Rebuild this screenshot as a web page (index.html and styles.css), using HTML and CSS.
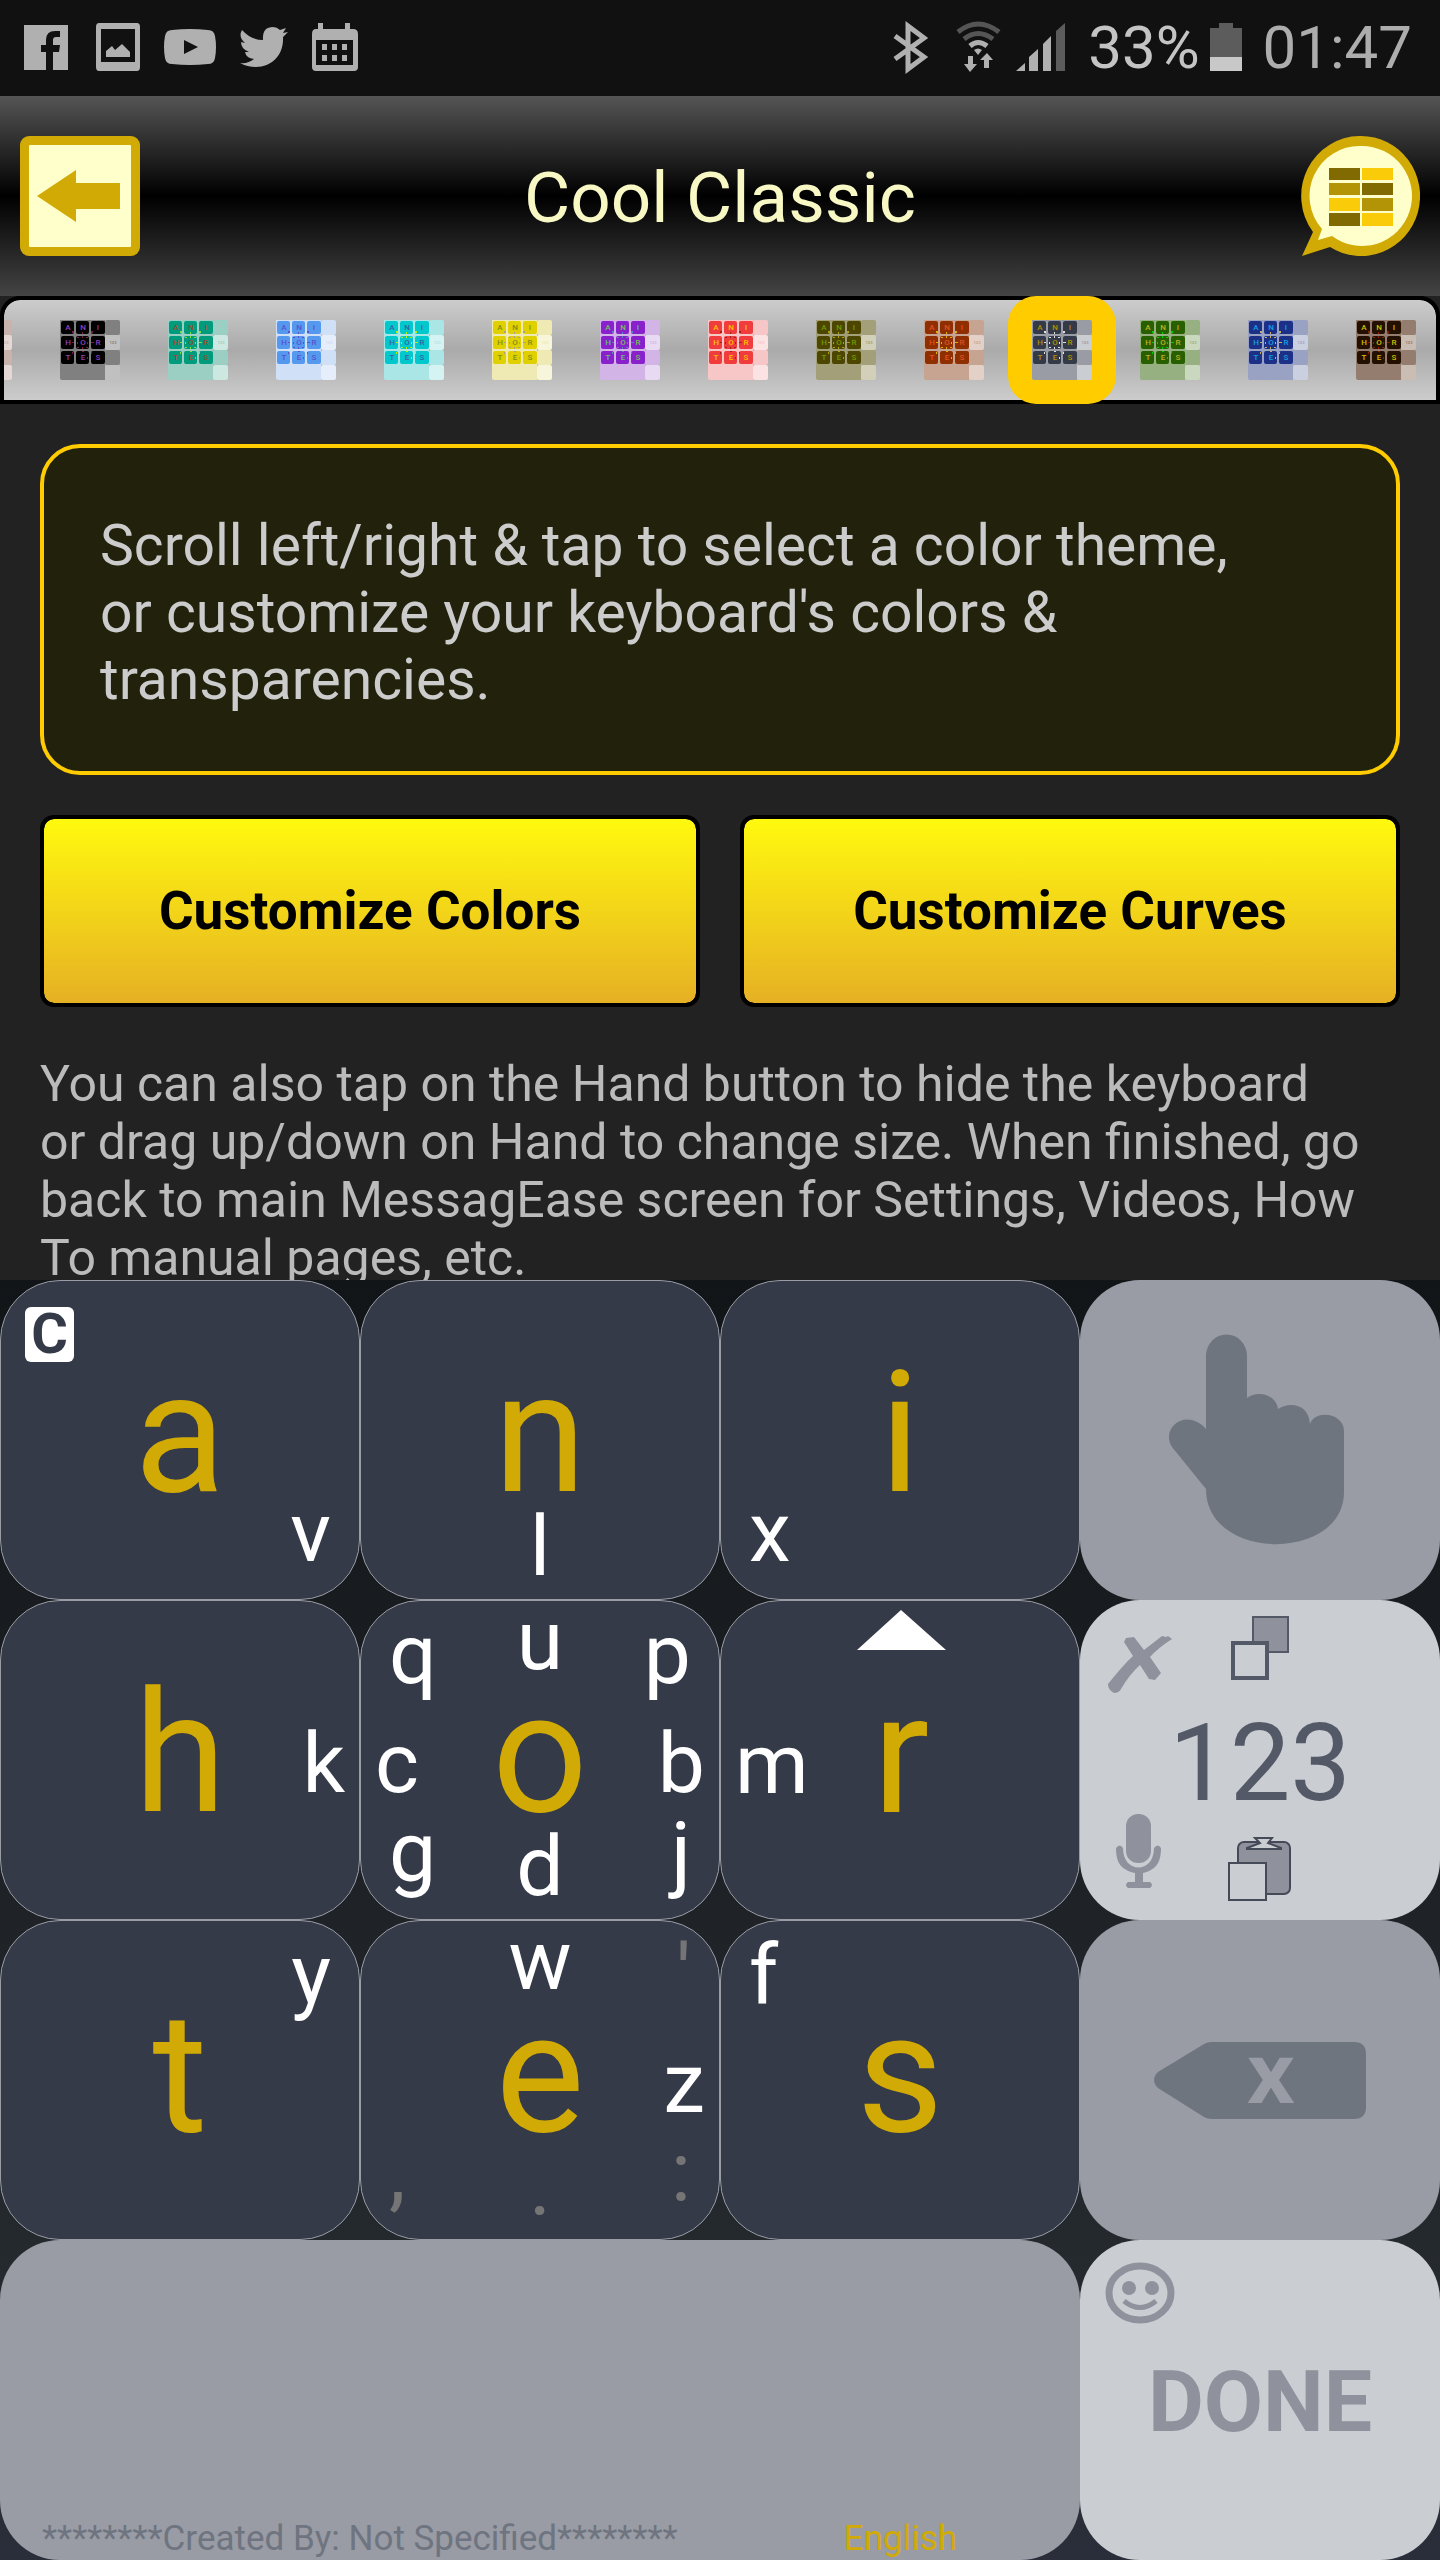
FILE: index.html
```html
<!DOCTYPE html>
<html lang="en">
<head>
<meta charset="utf-8">
<meta name="viewport" content="width=device-width, initial-scale=1">
<title>Cool Classic</title>
<link rel="stylesheet" href="styles.css">
</head>
<body>
<svg class="defs" aria-hidden="true">
  <symbol id="thumb" viewBox="0 0 60 60">
    <path class="t-mid" d="M0 0h45v60H2q-2 0-2-2z"/>
    <rect class="t-mid" x="45" width="15" height="15" rx="2"/>
    <rect class="t-mid" x="45" y="30" width="15" height="15" rx="2"/>
    <rect class="t-light" x="45" y="15" width="15" height="15" rx="2"/>
    <rect class="t-light" x="45" y="45" width="15" height="15" rx="2"/>
    <path class="t-key" d="M3 1h9q2 0 2 2v9q0 2-2 2H3q-2 0-2-2V3q0-2 2-2zM18 1h9q2 0 2 2v9q0 2-2 2h-9q-2 0-2-2V3q0-2 2-2zM33 1h10q2 0 2 2v9q0 2-2 2H33q-2 0-2-2V3q0-2 2-2zM3 16h9q2 0 2 2v9q0 2-2 2H3q-2 0-2-2v-9q0-2 2-2zM18 16h9q2 0 2 2v9q0 2-2 2h-9q-2 0-2-2v-9q0-2 2-2zM33 16h10q2 0 2 2v9q0 2-2 2H33q-2 0-2-2v-9q0-2 2-2zM3 31h9q2 0 2 2v9q0 2-2 2H3q-2 0-2-2v-9q0-2 2-2zM18 31h9q2 0 2 2v9q0 2-2 2h-9q-2 0-2-2v-9q0-2 2-2zM33 31h10q2 0 2 2v9q0 2-2 2H33q-2 0-2-2v-9q0-2 2-2z"/>
    <path class="t-hint" d="M12 11h2v2h-2zM22 12h1v2h-1zM31 11h2v2h-2zM17 17h2v1h-2zM22 16h1v2h-1zM26 17h2v1h-2zM12 22h2v1h-2zM17 22h1v2h-1zM27 22h1v2h-1zM31 22h3v1h-3zM17 27h2v1h-2zM22 27h1v2h-1zM26 27h2v1h-2zM12 32h1v2h-1zM22 31h2v1h-2zM31 32h1v2h-1zM27 37h1v2h-1z"/>
    <g class="t-text"><text x="8" y="10">A</text><text x="23" y="10">N</text><text x="38" y="10">I</text><text x="8" y="25">H</text><text x="23" y="25">O</text><text x="38" y="25">R</text><text x="8" y="40">T</text><text x="23" y="40">E</text><text x="38" y="40">S</text></g>
    <text class="t-num" x="53" y="24">123</text>
  </symbol>
</svg>
<div class="screen">
  <div class="status">
    <div class="status-group">
      <svg width="44" height="96" viewBox="24 0 44 96"><path d="M24 25h44v45H53V52h6l1-7h-7v-5q0-3 3-3h4v-6h-5q-9 0-9 9v5h-5v7h5v18H24z"/></svg>
      <svg width="48" height="96" viewBox="92 0 48 96"><path fill-rule="evenodd" d="M99 23h38q3 0 3 4v40q0 4-3 4H99q-3 0-3-4V27q0-4 3-4zm2 6v33h34V29zM106 57v-6l6-5 3 4 7-6 8 8v5z"/></svg>
      <svg width="52" height="96" viewBox="164 0 52 96"><path fill-rule="evenodd" d="M172 30q18-2 36 0 6 0 7 6 2 11 0 22-1 6-7 6-18 2-36 0-6 0-7-6-2-11 0-22 1-6 7-6zm12 10v14l14-7z"/></svg>
      <svg width="48" height="96" viewBox="240 0 48 96"><path d="M242 30q9 10 21 10-1-13 10-13 4 0 7 3l6-2-3 5 5-1-5 5c1 18-11 30-27 30q-9 0-16-4 8 1 14-4-8-1-9-7h4q-8-3-8-10l4 1q-7-6-3-13z"/></svg>
      <svg width="46" height="96" viewBox="312 0 46 96"><path fill-rule="evenodd" d="M316 29h2v-6h5v6h22v-6h5v6h3q5 0 5 5v33q0 4-4 4h-38q-4 0-4-4V34q0-5 4-5zm0 11v25h37V40zM322 44h5v6h-5zm10 0h5v6h-5zm10 0h5v6h-5zM322 55h5v6h-5zm10 0h5v6h-5zm10 0h5v6h-5z"/></svg>
    </div>
    <div class="status-group status-right">
      <svg width="54" height="96" viewBox="894 0 54 96"><path class="line" d="M897 36l29 21-16 12V26l16 12-29 21"/></svg>
      <svg width="50" height="96" viewBox="958 0 50 96"><path class="line dim" d="M960 32q20-16 41 0M966 39q14-11 29 0"/><path class="line" d="M972 46q8-7 17 0"/><path d="M976 50q4-3 8 0l-4 5zM970 56h5v8h4l-7 8-6-8h4zM986 68v-8h-4l7-7 6 7h-4v8z"/></svg>
      <svg width="62" height="96" viewBox="1018 0 62 96"><path d="M1018 71l9-8v8zM1031 71V57l9-8v22zM1045 71V44l8-8v35z"/><path class="dim-fill" d="M1058 71V31l9-8v48z"/></svg>
      <span class="battery-text">33%</span>
      <svg width="43" height="96" viewBox="1211 0 43 96"><path class="dim-fill" d="M1211 28h9v-5h14v5h9v29h-32z"/><path class="bright-fill" d="M1211 57h32v14h-32z"/></svg>
      <span class="clock">01:47</span>
    </div>
  </div>

  <header class="header">
    <button class="icon-button" aria-label="Back">
      <svg width="120" height="120" viewBox="0 0 120 120"><rect width="120" height="120" rx="9" fill="#d1aa05"/><rect x="9" y="9" width="102" height="102" rx="1" fill="#ffffcc"/><path fill="#d1aa05" d="M17 60l39-26v13h44v26H56v13z"/></svg>
    </button>
    <h1 class="title">Cool Classic</h1>
    <button class="icon-button" aria-label="Keyboard menu">
      <svg width="120" height="120" viewBox="0 0 120 120"><path fill="#d1aa05" d="M61 0a59 60 0 1 1-31 111L2 120l11-24A59 60 0 0 1 61 0z"/><path fill="#ffffcc" d="M61 10a50 50 0 1 1-29 90l-14 4 4-11A50 50 0 0 1 61 10z"/><path fill="#826a02" d="M29 32h31v12H29zM62 47h31v12H62zM29 77h31v13H29z"/><path fill="#b39406" d="M29 47h31v12H29zM62 62h31v13H62z"/><path fill="#facb08" d="M62 32h31v12H62zM29 62h31v13H29zM62 77h31v13H62z"/></svg>
    </button>
  </header>

  <nav class="themes" aria-label="Color themes">
    <button class="theme rose" aria-label="Rose"><svg class="thumb"><use href="#thumb"/></svg></button>
    <button class="theme black" aria-label="Black"><svg class="thumb"><use href="#thumb"/></svg></button>
    <button class="theme green" aria-label="Green"><svg class="thumb"><use href="#thumb"/></svg></button>
    <button class="theme sky" aria-label="Sky"><svg class="thumb"><use href="#thumb"/></svg></button>
    <button class="theme cyan" aria-label="Cyan"><svg class="thumb"><use href="#thumb"/></svg></button>
    <button class="theme yellow" aria-label="Yellow"><svg class="thumb"><use href="#thumb"/></svg></button>
    <button class="theme purple" aria-label="Purple"><svg class="thumb"><use href="#thumb"/></svg></button>
    <button class="theme red" aria-label="Red"><svg class="thumb"><use href="#thumb"/></svg></button>
    <button class="theme olive" aria-label="Olive"><svg class="thumb"><use href="#thumb"/></svg></button>
    <button class="theme rust" aria-label="Rust"><svg class="thumb"><use href="#thumb"/></svg></button>
    <button class="theme slate selected" aria-label="Cool Classic"><svg class="thumb"><use href="#thumb"/></svg></button>
    <button class="theme forest" aria-label="Forest"><svg class="thumb"><use href="#thumb"/></svg></button>
    <button class="theme navy" aria-label="Navy"><svg class="thumb"><use href="#thumb"/></svg></button>
    <button class="theme brown" aria-label="Brown"><svg class="thumb"><use href="#thumb"/></svg></button>
  </nav>

  <main class="settings">
    <p class="card">Scroll left/right &amp; tap to select a color theme,<br>or customize your keyboard's colors &amp;<br>transparencies.</p>
    <div class="actions">
      <button class="action">Customize Colors</button>
      <button class="action">Customize Curves</button>
    </div>
    <p class="note">You can also tap on the Hand button to hide the keyboard<br>or drag up/down on Hand to change size. When finished, go<br>back to main MessagEase screen for Settings, Videos, How<br>To manual pages, etc.</p>
  </main>

  <section class="keyboard" aria-label="Keyboard">
    <button class="key"><span class="badge">C</span><span class="main">a</span><span class="hint bottom right">v</span></button>
    <button class="key"><span class="main">n</span><span class="hint bottom">l</span></button>
    <button class="key"><span class="main">i</span><span class="hint bottom left">x</span></button>
    <button class="key mid" aria-label="Hand">
      <svg class="art" viewBox="0 0 360 320"><path fill="#6e757f" d="M126 149V76a20 21 0 0 1 41 0v42c10-8 29-4 31 11 13-8 31-4 32 15 5-15 34-11 34 7v61c0 70-138 70-138-3L92 167c-12-19 14-40 34-18z"/></svg>
    </button>

    <button class="key"><span class="main">h</span><span class="hint right edge">k</span></button>
    <button class="key"><span class="hint top left">q</span><span class="hint top">u</span><span class="hint top right">p</span><span class="hint left edge">c</span><span class="main">o</span><span class="hint right edge">b</span><span class="hint bottom left">g</span><span class="hint bottom">d</span><span class="hint bottom right">j</span></button>
    <button class="key"><svg class="art" viewBox="0 0 360 320"><path fill="#fff" d="M180 9l45 40h-89z"/></svg><span class="hint left edge">m</span><span class="main">r</span></button>
    <button class="key light">
      <svg class="art" viewBox="0 0 360 320">
        <path fill="#8f929c" d="M28 84q16-20 25-28l-9-14 2-4 8-1 10 13 18-14 4 1 2-1 4 3q-14 9-22 18l11 16-6 7-6-1-9-14Q49 75 41 89q-2 4-7 4-6-3-6-9z"/>
        <g stroke="#535967"><rect x="173" y="17" width="35" height="35" fill="#8f929c" stroke-width="2"/><rect x="153" y="43" width="34" height="35" fill="#cacdd2" stroke-width="4"/></g>
        <g fill="#8f929c"><rect x="46" y="214" width="25" height="49" rx="12"/><path d="M36 248q4-5 7 0c0 26 31 26 31 0q4-5 7 0c0 16-6 22-18 25v9h7q4 3 0 6H48q-4-3 0-6h7v-9c-13-3-19-9-19-25z"/></g>
        <g stroke="#454a58" stroke-width="2"><rect x="158" y="242" width="52" height="52" rx="6" fill="#8f929c"/><path fill="#cacdd2" d="M175 238h17l-4 5 13 5v1h-34v-1l13-5z"/><rect x="149" y="263" width="37" height="37" fill="#cacdd2"/></g>
      </svg>
      <span class="digits">123</span>
    </button>

    <button class="key"><span class="hint top right">y</span><span class="main">t</span></button>
    <button class="key"><span class="hint top">w</span><span class="hint top right punct">'</span><span class="main">e</span><span class="hint right edge">z</span><span class="hint bottom left punct">,</span><span class="hint bottom punct">.</span><span class="hint bottom right punct">:</span></button>
    <button class="key"><span class="hint top left">f</span><span class="main">s</span></button>
    <button class="key mid" aria-label="Backspace">
      <svg class="art" viewBox="0 0 360 320"><path fill="#6e757f" d="M124 124q3-2 8-2h142q12 0 12 12v53q0 12-12 12H132q-5 0-8-2l-46-29q-8-8 0-16z"/><text class="erase" x="191" y="183">x</text></svg>
    </button>

    <button class="key mid space"><span>********Created By: Not Specified********</span><span class="language">English</span></button>
    <button class="key light">
      <svg class="art" viewBox="0 0 360 320"><g fill="none" stroke="#8f929c"><ellipse cx="60" cy="53" rx="31" ry="27" stroke-width="7"/><path stroke-width="5" d="M44 61q16 13 32 0"/></g><circle cx="49" cy="48" r="7" fill="#8f929c"/><circle cx="72" cy="48" r="7" fill="#8f929c"/></svg>
      <span class="done">DONE</span>
    </button>
  </section>
</div>
</body>
</html>
```
FILE: styles.css
```css
* { box-sizing: border-box; }
body { margin: 0; background: #222; font-family: Roboto, "Liberation Sans", sans-serif; }
button { margin: 0; padding: 0; border: 0; background: none; color: inherit; font: inherit; }
svg { display: block; flex: none; }
.defs { display: none; }
.screen { display: flex; flex-direction: column; height: 100vh; }

.status { display: flex; flex: none; justify-content: space-between; padding: 0 28px 0 24px; background: #111; color: #adadad; }
.status-group { display: flex; gap: 24px; fill: #b0b0b0; }
.status-right { gap: 10px; font-size: 60px; line-height: 96px; }
.battery-text { color: #c4c4c4; }
.line { fill: none; stroke: #b0b0b0; stroke-width: 5; }
.dim { stroke: #555; }
.dim-fill { fill: #5c5c5c; }
.bright-fill { fill: #c8c8c8; }

.header { display: flex; flex: none; align-items: center; justify-content: space-between; height: 200px; padding: 0 20px; background: linear-gradient(#555, #000 50%, #444); }
.title { margin: 0; padding-top: 4px; color: #f8f8c4; font-size: 71px; font-weight: 400; line-height: 84px; }

.themes { display: flex; flex: none; justify-content: flex-end; height: 108px; overflow: visible; overflow-x: clip; background: linear-gradient(#ccc, #aaa 50%, #ccc) padding-box, #000 border-box; border: 4px solid #000; border-radius: 20px 20px 0 0; }
.theme { display: flex; flex: none; align-items: center; justify-content: center; width: 108px; height: 108px; margin: -4px 0; border-radius: 28px; }
.theme:last-child { margin-right: -4px; }
.selected { background: #fc0; }
.thumb { width: 60px; height: 60px; }
.t-mid { fill: var(--mid); }
.t-light { fill: var(--light); }
.t-key { fill: var(--key); }
.t-hint { fill: var(--hint); }
.t-text { fill: var(--letter); font-size: 8px; font-weight: 500; text-anchor: middle; }
.t-num { fill: var(--mid); font-size: 4px; font-weight: 700; text-anchor: middle; }
.rose { --key: #8b5a4a; --mid: #c9b2ac; --light: #e5d8d4; --letter: #552211; --hint: #552211; }
.black { --key: #000; --mid: #808080; --light: #c0c0c0; --letter: #9040c0; --hint: #7a1a4a; }
.green { --key: #009b7c; --mid: #9bcfc4; --light: #cce8e1; --letter: #a5472f; --hint: #7fe040; }
.sky { --key: #5599ee; --mid: #cfe0f7; --light: #e6eefb; --letter: #5a50d0; --hint: #5a50d0; }
.cyan { --key: #00c8cc; --mid: #aae6e6; --light: #d5f3f2; --letter: #3a5fa5; --hint: #b8f000; }
.yellow { --key: #e0d000; --mid: #efeab4; --light: #f7f5da; --letter: #7f8f10; --hint: #b0a080; }
.purple { --key: #8820cc; --mid: #d2b5e6; --light: #e9daf3; --letter: #6fc060; --hint: #6080c0; }
.red { --key: #f03c3c; --mid: #f7c6c6; --light: #fbe3e3; --letter: #ffc000; --hint: #a02020; }
.olive { --key: #4d4600; --mid: #a39f78; --light: #d2d0b8; --letter: #6f9a00; --hint: #b0a000; }
.rust { --key: #8f2f00; --mid: #c7a392; --light: #e3d0c7; --letter: #e05020; --hint: #e0b000; }
.slate { --key: #343a48; --mid: #999ca4; --light: #cacdd2; --letter: #b09000; --hint: #e0e0e0; }
.forest { --key: #286000; --mid: #96b082; --light: #c9d8bf; --letter: #c0b020; --hint: #00d000; }
.navy { --key: #1c3088; --mid: #9aa2c4; --light: #cbd0e1; --letter: #10a0e0; --hint: #c0b060; }
.brown { --key: #241000; --mid: #947c6e; --light: #c9bdb4; --letter: #d0c000; --hint: #8a2000; }

.settings { flex: 1 1 0; min-height: 0; overflow: hidden; padding: 40px 40px 0; background: #222; }
.card { margin: 0; padding: 64px 56px 58px; border: 4px solid #fc0; border-radius: 40px; background: #22220c; color: #ccc; font-size: 57px; line-height: 67px; }
.actions { display: grid; grid-template-columns: 1fr 1fr; gap: 40px; margin: 40px 0 48px; }
.action { height: 192px; border: 4px solid #000; border-radius: 14px; background: linear-gradient(#fff90e, #e6b024) padding-box, #000 border-box; color: #000; font-size: 53px; font-weight: 700; }
.note { margin: 0; color: #bbb; font-size: 50px; line-height: 58px; }

.keyboard { display: grid; flex: none; grid-template-columns: repeat(4, 1fr); grid-auto-rows: 320px; background: linear-gradient(#111518, #1f2327 50%, #24292d 75%, #2a2e3a); }
.key { display: grid; min-width: 0; overflow: hidden; border: 1px solid #999ca4; border-radius: 60px; background: #343a48; }
.key > * { grid-area: 1 / 1; place-self: center; }
.key.mid { border: 0; background: #999ca4; }
.key.light { border: 0; background: #cacdd2; }
.main { padding-bottom: 12px; color: #d1aa05; font-size: 168px; line-height: 156px; }
.hint { padding: 8px 28px 0; color: #fff; font-size: 84px; line-height: 80px; }
.key > .left { justify-self: start; }
.key > .right { justify-self: end; }
.key > .top { align-self: start; padding-top: 0; }
.key > .bottom { align-self: end; padding-bottom: 12px; }
.key > .top.left, .key > .top.right { padding-top: 14px; }
.key > .bottom.left, .key > .bottom.right { padding-bottom: 26px; }
.hint.edge { padding: 8px 14px 0; }
.hint.punct { color: #757575; }
.key > .badge { place-self: start; width: 49px; margin: 26px 24px; border-radius: 6px; background: #fff; color: #343a48; font-size: 56px; font-weight: 700; line-height: 55px; }
.art { width: 360px; height: 320px; }
.digits { padding-top: 6px; color: #535967; font-size: 108px; line-height: 104px; }
.done { padding-top: 4px; color: #8f929c; font-size: 86px; font-weight: 700; line-height: 88px; }
.erase { fill: #999ca4; font-family: "Open Sans", sans-serif; font-size: 82px; font-weight: 700; text-anchor: middle; }
.key.space { display: flex; grid-column: span 3; align-items: flex-end; justify-content: space-between; padding: 0 123px 0 42px; color: #6e7480; font-size: 35px; line-height: 42px; }
.space > * { place-self: auto; }
.language { color: #d1aa05; }
```
